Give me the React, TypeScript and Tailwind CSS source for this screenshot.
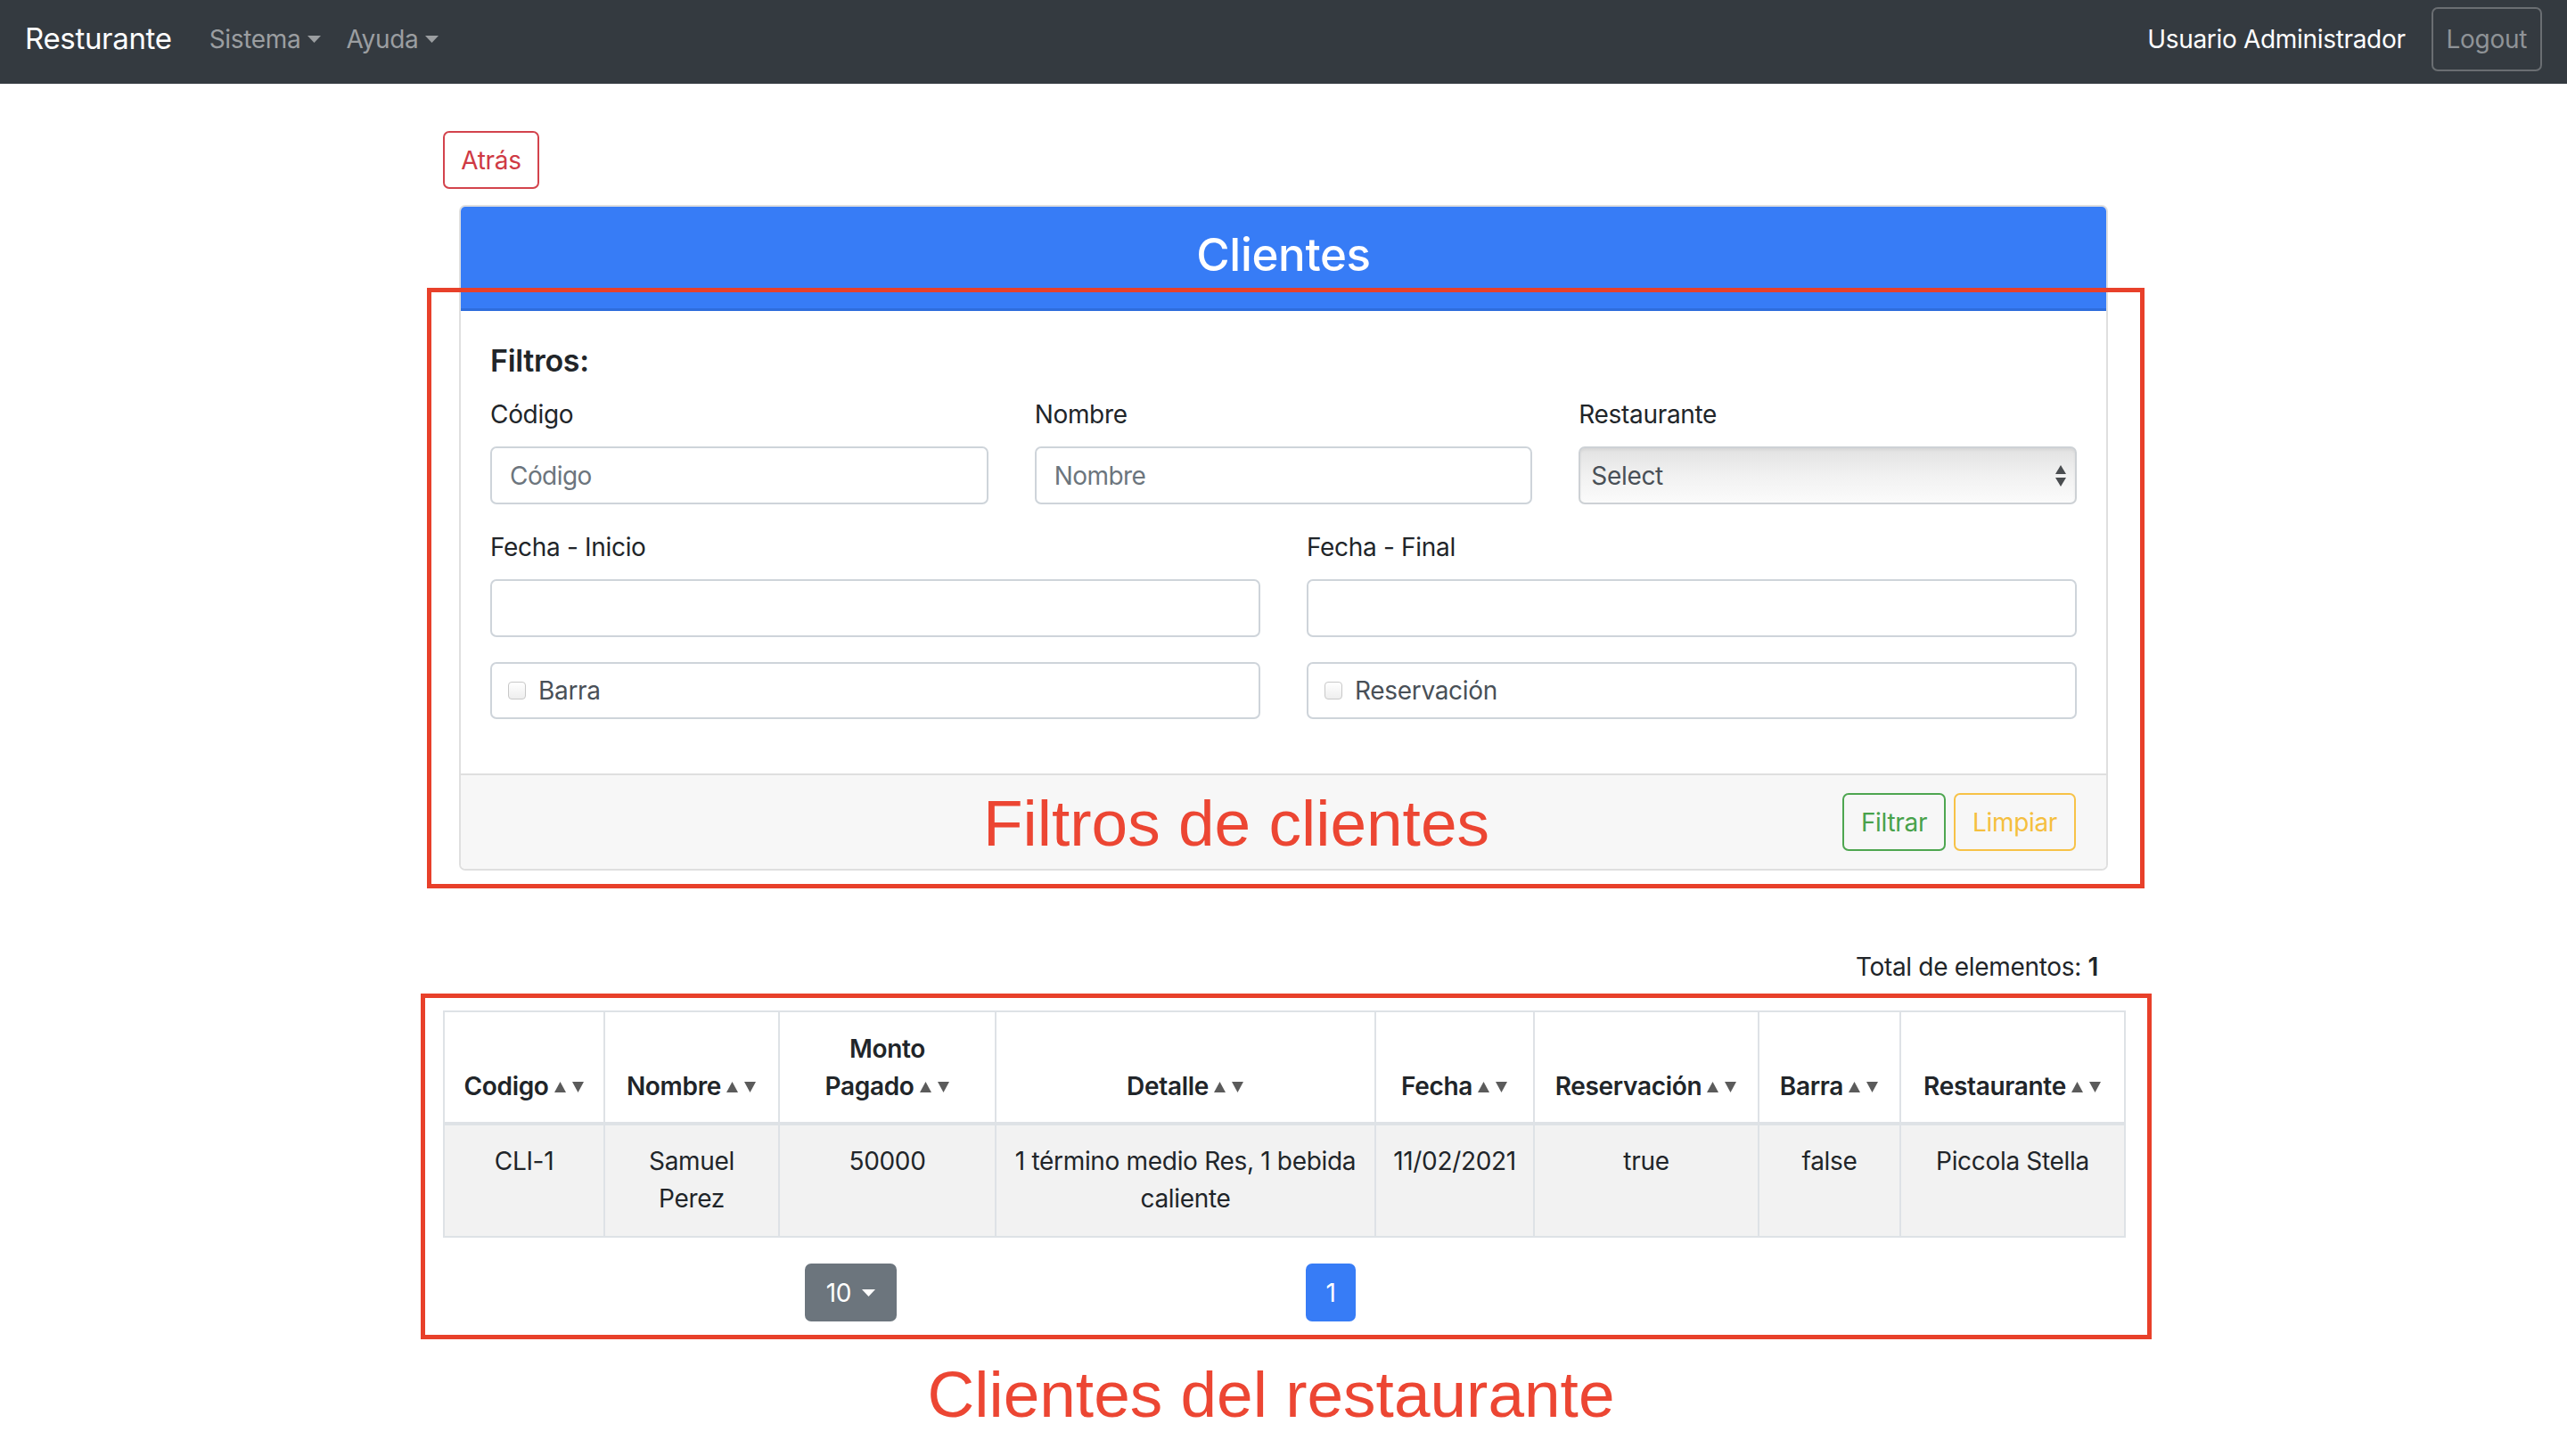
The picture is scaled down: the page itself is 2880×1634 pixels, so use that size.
import React from "react";

const columns = [
  { label: ["Codigo"], w: 180 },
  { label: ["Nombre"], w: 196 },
  { label: ["Monto", "Pagado"], w: 243 },
  { label: ["Detalle"], w: 426 },
  { label: ["Fecha"], w: 178 },
  { label: ["Reservación"], w: 252 },
  { label: ["Barra"], w: 159 },
  { label: ["Restaurante"], w: 252 },
];

const row = [
  ["CLI-1"],
  ["Samuel", "Perez"],
  ["50000"],
  ["1 término medio Res, 1 bebida", "caliente"],
  ["11/02/2021"],
  ["true"],
  ["false"],
  ["Piccola Stella"],
];

function Caret({ className = "" }: { className?: string }) {
  return (
    <svg width="15" height="8" viewBox="0 0 15 8" className={className}>
      <path d="M0 0 H15 L7.5 8 Z" fill="currentColor" />
    </svg>
  );
}

function SortIcon() {
  return (
    <svg width="34" height="14" viewBox="0 0 34 14" className="inline-block ml-[6px] mb-[3px]">
      <path d="M0 13 L6.5 1 L13 13 Z" fill="#5b5b5b" />
      <path d="M20 1 H33 L26.5 13 Z" fill="#5b5b5b" />
    </svg>
  );
}

function Label({ children }: { children: React.ReactNode }) {
  return <div className="text-[28px] leading-[44px] text-[#212529] mb-[14px]">{children}</div>;
}

function TextInput({ placeholder }: { placeholder?: string }) {
  return (
    <input
      placeholder={placeholder}
      className="w-full h-[65px] rounded-[7px] border-2 border-[#ced4da] px-[20px] text-[28px] tracking-[-0.02em] text-[#495057] placeholder:text-[#6c757d] outline-none"
    />
  );
}

function CheckBox({ label }: { label: string }) {
  return (
    <div className="h-[64px] rounded-[7px] border-2 border-[#ced4da] flex items-center pl-[18px] gap-[14px]">
      <span className="w-[20px] h-[20px] rounded-[4px] border border-[#c8c8c8] bg-linear-to-b from-white to-[#eeeeee]" />
      <span className="text-[28px] text-[#495057]">{label}</span>
    </div>
  );
}

export default function App() {
  return (
    <div className="relative min-h-[1634px] bg-white font-['Inter','Noto_Sans',sans-serif] tracking-[-0.02em] text-[#212529]">
      <nav className="h-[94px] bg-[#343a40] flex items-center px-[28px] pb-[6px]">
        <span className="text-[33px] text-white">Resturante</span>
        <div className="ml-[42px] flex items-center gap-[28px] text-[28px] text-[#9b9ea1]">
          <span className="flex items-center gap-[8px]">
            Sistema <Caret />
          </span>
          <span className="flex items-center gap-[8px]">
            Ayuda <Caret />
          </span>
        </div>
        <div className="ml-auto flex items-center gap-[29px]">
          <span className="text-[28px] text-white">Usuario Administrador</span>
          <button className="h-[72px] px-[15px] rounded-[7px] border-2 border-[#6a6e72] text-[28px] text-[#8f9397]">
            Logout
          </button>
        </div>
      </nav>

      <div className="mx-auto w-[1886px] pt-[53px]">
        <button className="h-[65px] w-[108px] rounded-[7px] border-2 border-[#d3434c] text-[28px] text-[#cf3a44]">
          Atrás
        </button>

        <div className="mx-[18px] mt-[18px] rounded-[7px] border-2 border-[#dfdfdf] overflow-hidden">
          <div className="h-[117px] bg-[#377cf6] border-b-[3px] border-[#2e6ddc] flex items-center justify-center pb-[6px]">
            <h2 className="text-[51px] font-medium text-white">Clientes</h2>
          </div>

          <div className="px-[33px] pt-[35px] pb-[61px]">
            <div className="text-[34px] leading-[41px] font-semibold mb-[18px]">Filtros:</div>

            <div className="grid grid-cols-3 gap-x-[52px]">
              <div>
                <Label>Código</Label>
                <TextInput placeholder="Código" />
              </div>
              <div>
                <Label>Nombre</Label>
                <TextInput placeholder="Nombre" />
              </div>
              <div>
                <Label>Restaurante</Label>
                <div className="h-[65px] rounded-[7px] border-2 border-[#cdd1d5] bg-linear-to-b from-[#e2e2e2] via-[#f1f1f1] to-[#fbfbfb] flex items-center justify-between pl-[12px] pr-[10px] shadow-[inset_0_2px_3px_rgba(0,0,0,0.06)]">
                  <span className="text-[28px] text-[#495057]">Select</span>
                  <svg width="12" height="26" viewBox="0 0 12 26">
                    <path d="M0 11 L6 1 L12 11 Z" fill="#4a4d50" />
                    <path d="M0 15 H12 L6 25 Z" fill="#4a4d50" />
                  </svg>
                </div>
              </div>
            </div>

            <div className="grid grid-cols-2 gap-x-[52px] mt-[26px]">
              <div>
                <Label>Fecha - Inicio</Label>
                <TextInput />
              </div>
              <div>
                <Label>Fecha - Final</Label>
                <TextInput />
              </div>
            </div>

            <div className="grid grid-cols-2 gap-x-[52px] mt-[28px]">
              <CheckBox label="Barra" />
              <CheckBox label="Reservación" />
            </div>
          </div>

          <div className="relative h-[107px] bg-[#f7f7f7] border-t-2 border-[#dfdfdf] flex items-center justify-end gap-[9px] pr-[34px]">
            <span className="absolute left-[586px] top-1/2 -translate-y-1/2 font-['Liberation_Sans',Arial,sans-serif] tracking-normal text-[73px] leading-none text-[#ec4633]">
              Filtros de clientes
            </span>
            <button className="h-[65px] w-[116px] rounded-[7px] border-2 border-[#4ea650] text-[28px] text-[#48a24b]">
              Filtrar
            </button>
            <button className="h-[65px] w-[137px] rounded-[7px] border-2 border-[#f7c247] text-[28px] text-[#f5bf3f]">
              Limpiar
            </button>
          </div>
        </div>

        <div className="mt-[87px] text-right pr-[29px] text-[28px] leading-[42px]">
          Total de elementos: <b className="font-semibold">1</b>
        </div>

        <table className="mt-[28px] w-full table-fixed border-collapse text-[28px]">
          <colgroup>
            {columns.map((c, i) => (
              <col key={i} style={{ width: c.w }} />
            ))}
          </colgroup>
          <thead>
            <tr>
              {columns.map((c, i) => (
                <th
                  key={i}
                  className="border-2 border-b-4 border-[#dee2e6] px-[10px] pt-[20px] pb-[19px] align-bottom text-center font-semibold leading-[42px] whitespace-nowrap"
                >
                  {c.label.map((l, j) => (
                    <div key={j}>
                      {l}
                      {j === c.label.length - 1 && <SortIcon />}
                    </div>
                  ))}
                </th>
              ))}
            </tr>
          </thead>
          <tbody>
            <tr className="bg-[#f2f2f2]">
              {row.map((cell, i) => (
                <td
                  key={i}
                  className="border-2 border-[#dee2e6] px-[10px] pt-[19px] pb-[21px] align-top text-center leading-[42px] whitespace-nowrap"
                >
                  {cell.map((l, j) => (
                    <div key={j}>{l}</div>
                  ))}
                </td>
              ))}
            </tr>
          </tbody>
        </table>

        <div className="mt-[29px] flex items-center pl-[406px]">
          <button className="h-[65px] w-[103px] rounded-[7px] bg-[#6c757d] text-white text-[28px] flex items-center justify-center gap-[12px]">
            10 <Caret />
          </button>
          <button className="ml-[459px] h-[65px] w-[56px] rounded-[7px] bg-[#377cf6] text-white text-[28px]">
            1
          </button>
        </div>

        <div className="mt-[40px] pr-[28px] text-center font-['Liberation_Sans',Arial,sans-serif] tracking-normal text-[73px] leading-[84px] text-[#ec4633]">
          Clientes del restaurante
        </div>
      </div>

      <div className="absolute left-[479px] top-[323px] w-[1927px] h-[674px] border-[5px] border-[#e8402a] pointer-events-none" />
      <div className="absolute left-[472px] top-[1115px] w-[1942px] h-[388px] border-[5px] border-[#e8402a] pointer-events-none" />
    </div>
  );
}
